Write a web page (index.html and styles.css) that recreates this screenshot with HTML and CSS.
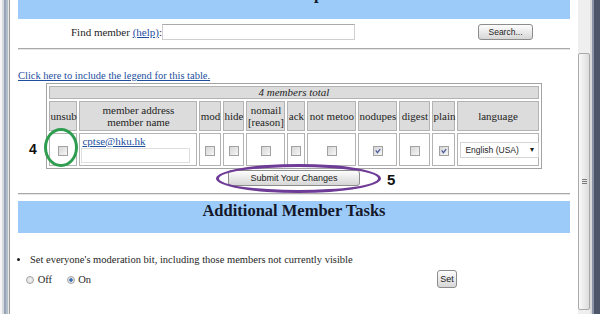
FILE: index.html
```html
<!DOCTYPE html>
<html lang="en">
<head>
  <meta charset="UTF-8">
  <meta name="viewport" content="width=device-width, initial-scale=1.0">
  <title>Membership List - Mailing list administration</title>
  <link rel="stylesheet" href="styles.css">
</head>
<body>
  <div class="frame-left"></div>

  <div class="page">
    <h2 class="band band-top">Membership List</h2>

    <div class="find-row">
      <label class="find-label" for="findmember">Find member <a href="#">(help)</a>:</label>
      <input type="text" id="findmember" class="find-input">
      <button class="btn btn-search">Search...</button>
    </div>
    <hr>

    <p class="legend"><a href="#">Click here to include the legend for this table.</a></p>

    <div class="members">
      <table class="member-table">
        <colgroup>
          <col class="c-unsub">
          <col class="c-address">
          <col class="c-mod">
          <col class="c-hide">
          <col class="c-nomail">
          <col class="c-ack">
          <col class="c-metoo">
          <col class="c-nodupes">
          <col class="c-digest">
          <col class="c-plain">
          <col class="c-lang">
        </colgroup>
        <tr>
          <th colspan="11" class="total">4 members total</th>
        </tr>
        <tr class="heads">
          <th>unsub</th>
          <th>member address<br>member name</th>
          <th>mod</th>
          <th>hide</th>
          <th>nomail<br>[reason]</th>
          <th>ack</th>
          <th>not metoo</th>
          <th>nodupes</th>
          <th>digest</th>
          <th>plain</th>
          <th>language</th>
        </tr>
        <tr class="member-row">
          <td><span class="cb"></span></td>
          <td class="address">
            <a href="#">cptse@hku.hk</a>
            <input type="text" class="name-input">
          </td>
          <td><span class="cb"></span></td>
          <td><span class="cb"></span></td>
          <td><span class="cb"></span></td>
          <td><span class="cb"></span></td>
          <td><span class="cb"></span></td>
          <td><span class="cb on"><svg viewBox="0 0 10 10"><path d="M2.2 4.2 L4.3 7.2 L7.8 2.6"/></svg></span></td>
          <td><span class="cb"></span></td>
          <td><span class="cb on"><svg viewBox="0 0 10 10"><path d="M2.2 4.2 L4.3 7.2 L7.8 2.6"/></svg></span></td>
          <td>
            <span class="lang-select">English (USA) <span class="arrow">&#9662;</span></span>
          </td>
        </tr>
      </table>

      <div class="submit-row">
        <button class="btn btn-submit">Submit Your Changes</button>
      </div>

      <!-- callouts drawn over the screenshot -->
      <span class="mark mark-4">4</span>
      <span class="ring ring-green"></span>
      <span class="ring ring-purple"></span>
      <span class="mark mark-5">5</span>
    </div>
    <hr>

    <h2 class="band band-tasks">Additional Member Tasks</h2>

    <ul class="tasks">
      <li>Set everyone's moderation bit, including those members not currently visible</li>
    </ul>

    <div class="radio-row">
      <div class="radios">
        <label><input type="radio" name="allmodbit"> Off</label>
        <label><input type="radio" name="allmodbit" checked> On</label>
      </div>
      <button class="btn btn-set">Set</button>
    </div>
  </div>

  <div class="scrollbar">
    <div class="track">
      <div class="thumb"><span class="grip"></span></div>
    </div>
    <div class="edge"></div>
  </div>
</body>
</html>
```

FILE: styles.css
```css
* {
  box-sizing: border-box;
}
html,
body {
  margin: 0;
  height: 314px;
  overflow: hidden;
}
body {
  display: flex;
  background-color: white;
  font-family: 'Liberation Serif', 'Times New Roman', serif;
  font-size: 10.5px;
  color: #1e1e1e;
}
a {
  color: #1d4f9e;
}

/* window frame on the left */
.frame-left {
  flex: none;
  width: 10px;
  background: linear-gradient(to right, #f6f6f6 0 2px, #d6dae0 2px 4px, #97a4b6 4px 6px, #b3bdca 6px 8px, #e8e8e8 8px 9px, #9a9a9a 9px 10px);
}

.page {
  flex: 1;
  min-width: 0;
  padding: 0 8px;
  margin-top: -13px;
}

.band {
  margin: 0;
  height: 32px;
  line-height: 20px;
  background-color: #9ccbfa;
  text-align: center;
  font-size: 16.5px;
  font-weight: bold;
  color: #14182a;
}
/* page is scrolled: only the foot of the title shows */
.band-top {
  line-height: 13px;
}
.band-tasks {
  margin-top: 6px;
}

/* find member */
.find-row {
  display: grid;
  grid-template-columns: 144px 193px 1fr;
  align-items: center;
  padding: 5px 0 8px;
}
.find-label {
  text-align: right;
  font-size: 11px;
}
.find-input {
  height: 16px;
  border: 1px solid #cfcfcf;
  border-top-color: #a9a9a9;
}
.btn {
  border: 1px solid #8c8c8c;
  border-radius: 3px;
  background: linear-gradient(#fdfdfd, #e6e6e6 60%, #d6d6d6);
  font-family: 'Liberation Sans', Arial, sans-serif;
  color: #222;
  padding: 0;
}
.btn-search {
  justify-self: end;
  margin-right: 37px;
  width: 55px;
  height: 16px;
  font-size: 8.5px;
}

hr {
  margin: 0;
  height: 0;
  border: 0;
  border-top: 1px solid #a9a9a9;
  border-bottom: 1px solid #e6e6e6;
}

.legend {
  margin: 19px 0 1px;
  line-height: 13px;
}

/* member table */
.members {
  position: relative;
}
.member-table {
  width: 495px;
  margin: 0 auto;
  table-layout: fixed;
  border: 1px solid #a3a3a3;
  border-spacing: 2px;
  font-size: 11px;
}
.c-unsub { width: 28px; }
.c-address { width: 118px; }
.c-mod { width: 22px; }
.c-hide { width: 21px; }
.c-nomail { width: 39px; }
.c-ack { width: 18px; }
.c-metoo { width: 49px; }
.c-nodupes { width: 39px; }
.c-digest { width: 31px; }
.c-plain { width: 23px; }
.c-lang { width: 81px; }

.member-table th,
.member-table td {
  border: 1px solid #b3b3b3;
  padding: 0;
  text-align: center;
  font-weight: normal;
  white-space: nowrap;
}
.member-table th {
  background-color: #dcdcdc;
}
.total {
  height: 13px;
  line-height: 11px;
  font-style: italic;
}
.heads th {
  height: 30px;
  line-height: 12.5px;
}
.member-row td {
  height: 33px;
}
.member-row td.address {
  text-align: left;
  vertical-align: top;
  padding: 1px 0 0 1px;
}
.address a {
  display: block;
  line-height: 13px;
  padding-left: 1px;
}
.name-input {
  display: block;
  width: 109px;
  height: 15px;
  border: 1px solid #dedede;
}

.cb {
  display: inline-block;
  width: 10px;
  height: 10px;
  vertical-align: middle;
  border: 1px solid #a2a2a2;
  background: linear-gradient(135deg, #d6d6d6, #f6f6f6);
}
.cb svg {
  display: block;
  width: 8px;
  height: 8px;
  fill: none;
  stroke: #4b5a9c;
  stroke-width: 1.6;
}

.lang-select {
  display: flex;
  align-items: center;
  justify-content: space-between;
  width: 79px;
  height: 16px;
  margin-left: 2px;
  padding: 0 4px 0 4px;
  border: 1px solid #d4d4d4;
  font-family: 'Liberation Sans', Arial, sans-serif;
  font-size: 8.5px;
}
.lang-select .arrow {
  font-size: 8px;
}

.submit-row {
  padding: 1px 0 7px;
  text-align: center;
}
.btn-submit {
  width: 132px;
  height: 16px;
  font-size: 9px;
}

/* annotation callouts */
.mark {
  position: absolute;
  font-family: 'Liberation Sans', Arial, sans-serif;
  font-weight: bold;
  font-size: 14px;
  line-height: 16px;
  color: #111;
}
.mark-4 {
  left: 11px;
  top: 58px;
}
.mark-5 {
  left: 369px;
  top: 89px;
  font-size: 15px;
}
.ring {
  position: absolute;
  border-radius: 50%;
}
.ring-green {
  left: 26px;
  top: 45px;
  width: 34px;
  height: 39px;
  border: 3px solid #2f9d50;
}
.ring-purple {
  left: 198px;
  top: 81px;
  width: 165px;
  height: 29px;
  border: 3px solid #6e3b96;
  z-index: 1;
}

.tasks {
  margin: 20px 0 0;
  padding-left: 12px;
  line-height: 13px;
}

.radio-row {
  display: grid;
  grid-template-columns: 411px auto;
  align-items: center;
  height: 18px;
  margin-top: 4px;
  padding-left: 8px;
}
.radios label {
  margin-right: 12px;
}
.radios input {
  appearance: none;
  width: 8px;
  height: 8px;
  margin: 0 1px 0 0;
  vertical-align: -1px;
  border: 1px solid #a6a6a6;
  border-radius: 50%;
  background: radial-gradient(#f4f4f4, #d8d8d8);
}
.radios input:checked {
  background: radial-gradient(#3f6fb4 0 35%, #e4e4e4 45%);
}
.btn-set {
  justify-self: start;
  width: 20px;
  height: 18px;
  font-size: 9px;
}

/* browser scrollbar */
.scrollbar {
  flex: none;
  display: flex;
  width: 22px;
}
.track {
  width: 12px;
  padding-top: 53px;
  background-color: #efefef;
}
.thumb {
  display: flex;
  align-items: center;
  justify-content: center;
  height: 257px;
  border: 1px solid #a9a9a9;
  border-radius: 2px;
  background: linear-gradient(to right, #fafafa, #dcdcdc);
}
.grip {
  width: 5px;
  height: 5px;
  background: repeating-linear-gradient(#7a7a7a 0 1px, transparent 1px 2px);
}
.edge {
  flex: 1;
  background: linear-gradient(to right, #dadada 0 2px, #8a94a4 2px 4px, #4d5769 4px);
}
```
